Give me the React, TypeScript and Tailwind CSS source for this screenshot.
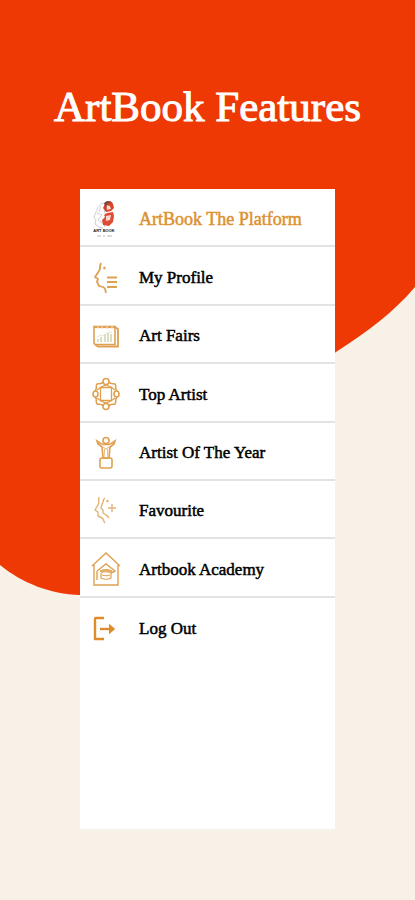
import React from "react";

const gold = "#dfa050";

function LogoIcon() {
  return (
    <svg viewBox="0 0 28 42" className="h-[42px] w-7" fill="none">
      <path
        d="M9 6C5 9 5 13 3 16l-1 4 2 2-1 4 4 3 4 1M9 6l3-1 3 2-3 5 2 6-3 5 2 6M5 15l5 2-4 5 6 4M9 8l-2 6"
        stroke="#cdd0d3"
        strokeWidth="1"
      />
      <path d="M14 4c3-2 6-1 7 2l1 4-3 3-5 1-3-4z" fill="#d9422b" />
      <path d="M12 17l3-2 6-1 1 4-1 6-4 4-6-1-1-5 3-3z" fill="#df4b33" />
      <path d="M14 7l4 1 1 3-4 1zM14 18l5-1-1 5-4 1z" fill="#f8d9d0" />
      <path d="M12 5l3-2 4 1-4 2-1 5z" fill="#7d4439" />
      <text
        x="12"
        y="34"
        textAnchor="middle"
        fontSize="4"
        fontWeight="bold"
        fontFamily="Liberation Sans, sans-serif"
        fill="#222"
      >
        ART BOOK
      </text>
      <path d="M5 38h4m2 0h2m2 0h5" stroke="#c4b5b5" strokeWidth="1" />
    </svg>
  );
}

function ProfileIcon() {
  return (
    <svg viewBox="0 0 28 36" className="h-9 w-7" fill="none" stroke={gold}>
      <path
        d="M9 3c-2 4 0 5-2 8l-4 6c0 1 3 1 3 2l-1 3 2 4 4 1c3 1 2 3 3 6"
        strokeWidth="1.8"
      />
      <circle cx="12.5" cy="8" r="1.1" fill={gold} strokeWidth=".6" />
      <path d="M15 17.5h10M15 22h10M15 27h10" strokeWidth="1.8" />
    </svg>
  );
}

function FairsIcon() {
  return (
    <svg viewBox="0 0 28 28" className="size-7" fill="none" stroke={gold}>
      <path d="M2 4.500h21v18H4a2 2 0 0 1-2-2z" strokeWidth="1.600" />
      <path d="M23 5l3 2v17.500H6l-3-2" strokeWidth="1.800" />
      <path d="M2 5h21" strokeWidth="2.200" />
      <path d="M6 3v4M10 3v4M15 3v4M20 3v4" stroke="#f4dfc3" strokeWidth="1" />
      <path
        d="M6 20v-3M9 20v-5M13 20v-8M16 20v-9M19 20v-8"
        stroke="#cdd0ab"
        strokeWidth="1.400"
      />
      <path d="M5 15l4-2 3 1 3-3 5-1" stroke="#dde0c5" strokeWidth=".8" />
    </svg>
  );
}

function TopArtistIcon() {
  return (
    <svg
      viewBox="0 0 30 36"
      className="h-9 w-[30px]"
      fill="none"
      stroke={gold}
      strokeWidth="1.600"
    >
      <path d="M9.500 11.500h11v13h-11z" strokeWidth="1.300" />
      <circle cx="15" cy="5.500" r="3" />
      <circle cx="15" cy="30.500" r="3" />
      <ellipse cx="4.500" cy="18" rx="2.500" ry="3" />
      <ellipse cx="25.500" cy="18" rx="2.500" ry="3" />
      <path d="M12 6C10 9 8 7 6 8c-2 2 1 4-2 7M18 6c2 3 4 1 6 2 2 2-1 4 2 7M12 30c-2-3-4-1-6-2-2-2 1-4-2-7M18 30c2-3 4-1 6-2 2-2-1-4 2-7" />
      <path d="M6 14l4-3 5-2 5 2 4 3M6 22l4 3 5 2 5-2 4-3" strokeWidth="1.200" />
    </svg>
  );
}

function AwardIcon() {
  return (
    <svg
      viewBox="0 0 28 36"
      className="h-9 w-7"
      fill="none"
      stroke={gold}
      strokeWidth="1.600"
    >
      <circle cx="14" cy="5.500" r="3" />
      <path d="M5 6l1 3 4 3 1 11h6l1-11 4-3 1-3-3 2-3 1.500h-6L8 8z" />
      <path d="M11 12l3 2 3-2M12.500 14l-.5 8M15.500 14l.5 8" strokeWidth=".8" />
      <rect x="8" y="23" width="12" height="10" rx="2" />
    </svg>
  );
}

function FavouriteIcon() {
  return (
    <svg
      viewBox="0 0 28 36"
      className="h-9 w-7"
      fill="none"
      stroke="#e3b477"
      strokeWidth="1.400"
    >
      <path d="M7 4c-1 4 1 5-1 8l-3 5 3 2v4l4 2c2 1 1 3 3 5" />
      <path d="M13 5c-3 2-1 4-3 6l-1 4 2 2v3l3 2c2 1 2 2 3 3" />
      <path d="M20 11v8M16 15h8" />
      <circle cx="15.500" cy="8" r=".6" fill="#e3b477" />
    </svg>
  );
}

function AcademyIcon() {
  return (
    <svg
      viewBox="0 0 32 36"
      className="h-9 w-8"
      fill="none"
      stroke={gold}
      strokeWidth="1.400"
    >
      <path d="M2 15L16 2l14 13M4 14v20h24V14" />
      <path d="M7 20l9-7 9 7-4 2M7 20v9" />
      <path d="M10 20c3-2 9-2 12 0l-2 1.500c-3-1-6-1-8 0z" fill="#e8b877" strokeWidth="1" />
      <path d="M11 22v5c3 1.500 7 1.500 10 0v-5" strokeWidth="1.200" />
      <path d="M12 24c3 1 5 1 8 0" strokeWidth="1" />
    </svg>
  );
}

function LogOutIcon() {
  return (
    <svg
      viewBox="0 0 28 28"
      className="size-7"
      fill="none"
      stroke="#de8c2b"
      strokeWidth="2.400"
      strokeLinejoin="round"
    >
      <path d="M12 3H4a1 1 0 0 0-1 1v20h9" />
      <path d="M8 14h14" />
      <path d="M17.500 9.500l5 4.500-5 4.500z" fill="#de8c2b" strokeWidth="1" />
    </svg>
  );
}

const items = [
  { label: "ArtBook The Platform", Icon: LogoIcon, active: true },
  { label: "My Profile", Icon: ProfileIcon },
  { label: "Art Fairs", Icon: FairsIcon },
  { label: "Top Artist", Icon: TopArtistIcon },
  { label: "Artist Of The Year", Icon: AwardIcon },
  { label: "Favourite", Icon: FavouriteIcon },
  { label: "Artbook Academy", Icon: AcademyIcon },
];

const row = "flex h-full w-full items-center gap-[15px] pt-1 pl-2 text-left";

function App() {
  return (
    <div className="relative isolate min-h-screen bg-[#f8f1e7] px-20 pt-20 pb-[71px] font-['Liberation_Serif',serif]">
      <svg
        viewBox="0 0 415 600"
        preserveAspectRatio="none"
        className="absolute inset-x-0 top-0 -z-10 h-[600px] w-full"
      >
        <path
          d="M0 0H415V287C393 313 367 332 336 352C250 410 220 600 80 595C50 594 22 583 0 565Z"
          fill="#ef3905"
        />
      </svg>
      <h1 className="-mx-20 text-center text-[43px] leading-[54px] text-white [-webkit-text-stroke:1px_white]">
        ArtBook Features
      </h1>
      <nav className="mt-[55px] min-h-[640px] bg-white">
        <ul className="grid min-h-[467px] auto-rows-fr text-[17px] text-black [-webkit-text-stroke:0.5px]">
          {items.map(({ label, Icon, active }) => (
            <li key={label} className="border-b-2 border-[#e3e3e3]">
              <a href="#" className={row}>
                <span className="flex w-9 justify-center">
                  <Icon />
                </span>
                <span className={active ? "text-lg text-[#dc912f]" : ""}>{label}</span>
              </a>
            </li>
          ))}
          <li>
            <button type="button" className={row}>
              <span className="flex w-9 justify-center">
                <LogOutIcon />
              </span>
              <span>Log Out</span>
            </button>
          </li>
        </ul>
      </nav>
    </div>
  );
}

export default App;
